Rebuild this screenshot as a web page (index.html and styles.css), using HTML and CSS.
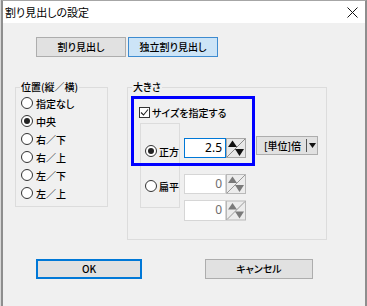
FILE: index.html
```html
<!DOCTYPE html>
<html lang="ja">
<head>
<meta charset="utf-8">
<title>割り見出しの設定</title>
<link rel="stylesheet" href="styles.css">
</head>
<body>
<div class="window">
  <div class="titlebar">
    <span class="title">割り見出しの設定</span>
    <svg class="close" width="11" height="11" viewBox="0 0 11 11"><path d="M0.5 0.5 L10.5 10.5 M10.5 0.5 L0.5 10.5" stroke="#111" stroke-width="1" fill="none"/></svg>
  </div>
  <div class="body">
    <div class="tabs">
      <button class="btn tab">割り見出し</button>
      <button class="btn tab active">独立割り見出し</button>
    </div>
    <div class="groups">
      <div class="group pos">
        <span class="legend">位置(縦／横)</span>
        <div class="radio-list">
          <label class="radio"><span class="rb"></span>指定なし</label>
          <label class="radio"><span class="rb on"></span>中央</label>
          <label class="radio"><span class="rb"></span>右／下</label>
          <label class="radio"><span class="rb"></span>右／上</label>
          <label class="radio"><span class="rb"></span>左／下</label>
          <label class="radio"><span class="rb"></span>左／上</label>
        </div>
      </div>
      <div class="group size">
        <span class="legend">大きさ</span>
        <label class="check"><span class="cb"><svg width="9" height="9" viewBox="0 0 9 9"><path d="M1 4.5 L3.5 7 L8 1.5" stroke="#222" stroke-width="1.1" fill="none"/></svg></span>サイズを指定する</label>
        <div class="size-row">
          <div class="frame">
            <label class="radio"><span class="rb on"></span>正方</label>
            <label class="radio"><span class="rb"></span>扁平</label>
          </div>
          <div class="inputs">
            <div class="spin-field f1">
              <span class="field focus">2.5</span>
              <svg class="spin" width="20" height="20" viewBox="0 0 20 20"><rect x="0.5" y="0.5" width="19" height="19" fill="#e8e8e8" stroke="#a8a8a8"/><path d="M1 19 L19 1" stroke="#8c8c8c"/><path d="M2 9 L6.5 2.5 L11 9 Z" fill="#111"/><path d="M9 11 L18 11 L13.5 18 Z" fill="#111"/></svg>
            </div>
            <div class="spin-field f2 disabled">
              <span class="field">0</span>
              <svg class="spin" width="20" height="20" viewBox="0 0 20 20"><rect x="0.5" y="0.5" width="19" height="19" fill="#ececec" stroke="#b8b8b8"/><path d="M1 19 L19 1" stroke="#9a9a9a"/><path d="M2 9 L6.5 2.5 L11 9 Z" fill="#7a7a7a"/><path d="M9 11 L18 11 L13.5 18 Z" fill="#7a7a7a"/></svg>
            </div>
            <div class="spin-field f3 disabled">
              <span class="field">0</span>
              <svg class="spin" width="20" height="20" viewBox="0 0 20 20"><rect x="0.5" y="0.5" width="19" height="19" fill="#ececec" stroke="#b8b8b8"/><path d="M1 19 L19 1" stroke="#9a9a9a"/><path d="M2 9 L6.5 2.5 L11 9 Z" fill="#7a7a7a"/><path d="M9 11 L18 11 L13.5 18 Z" fill="#7a7a7a"/></svg>
            </div>
          </div>
          <div class="combo">
            <span class="combo-text">[単位]倍</span>
            <span class="combo-arrow"><svg width="7" height="5" viewBox="0 0 7 5"><path d="M0 0 L7 0 L3.5 5 Z" fill="#111"/></svg></span>
          </div>
        </div>
        <div class="highlight"></div>
      </div>
    </div>
    <div class="footer">
      <button class="btn ok">OK</button>
      <button class="btn cancel">キャンセル</button>
    </div>
  </div>
</div>
</body>
</html>
```
FILE: styles.css
```css
* { box-sizing: border-box; }
html, body { margin: 0; padding: 0; }
body {
  width: 367px;
  height: 306px;
  background: #d8d8d8;
  font-family: "Noto Sans CJK JP", "Noto Sans", sans-serif;
  font-size: 10px;
  font-weight: 500;
  font-feature-settings: "palt";
  color: #000;
  overflow: hidden;
}
.window {
  margin-left: 1px;
  width: 366px;
  height: 306px;
  border-left: 2px solid #8e8e8e;
  border-right: 2px solid #8e8e8e;
  border-top: 1px solid #a6a6a6;
  background: #f0f0f0;
}
.titlebar {
  height: 22px;
  background: #fff;
  display: flex;
  align-items: center;
  justify-content: space-between;
  padding: 0 7px 0 2px;
}
.title { font-size: 11px; line-height: 14px; font-weight: 400; }
.close { display: block; }
.body { padding: 14px 0 0 33px; }
.tabs { display: flex; gap: 2px; }
.btn {
  font-family: inherit;
  font-size: 10px;
  font-weight: 500;
  font-feature-settings: "palt";
  color: #000;
  background: #e1e1e1;
  border: 1px solid #adadad;
  padding: 0;
  margin: 0;
  height: 20px;
  line-height: 18px;
}
.tab { width: 90px; }
.tab.active { background: #cce4f7; border-color: #3d8bd0; }
.groups {
  display: flex;
  align-items: flex-start;
  gap: 19px;
  margin: 30px 0 0 -21px;
}
.group {
  position: relative;
  border: 1px solid #dcdcdc;
}
.legend {
  position: absolute;
  top: -8px;
  left: 4px;
  background: #f0f0f0;
  padding: 0 1px;
  line-height: 14px;
  white-space: nowrap;
}
.pos { width: 93px; height: 120px; padding: 6px 0 0 5px; }
.size { width: 200px; height: 153px; padding: 17px 0 0 11px; }
.radio-list { display: flex; flex-direction: column; }
.radio {
  display: flex;
  align-items: center;
  gap: 3px;
  height: 18px;
  white-space: nowrap;
}
.rb {
  width: 12px;
  height: 12px;
  border: 1px solid #333;
  border-radius: 50%;
  background: #fff;
  display: flex;
  align-items: center;
  justify-content: center;
  flex: none;
}
.rb.on::after {
  content: "";
  width: 6px;
  height: 6px;
  border-radius: 50%;
  background: #222;
}
.check {
  display: flex;
  align-items: center;
  gap: 2px;
  height: 14px;
  white-space: nowrap;
}
.cb {
  width: 11px;
  height: 11px;
  border: 1px solid #333;
  background: #fff;
  display: flex;
  align-items: center;
  justify-content: center;
}
.cb svg { display: block; }
.size-row {
  display: flex;
  align-items: flex-start;
  margin: 4px 0 0 1px;
}
.frame {
  width: 40px;
  height: 85px;
  border: 1px solid #dcdcdc;
  padding: 18px 0 0 4px;
  display: flex;
  flex-direction: column;
  gap: 17px;
}
.frame .radio { gap: 2px; }
.inputs {
  display: flex;
  flex-direction: column;
  margin: 15px 0 0 4px;
}
.spin-field { display: flex; height: 20px; }
.f2 { margin-top: 16px; }
.f3 { margin-top: 6px; height: 21px; }
.field {
  width: 42px;
  height: 100%;
  background: #fff;
  border: 1px solid #c8c8c8;
  font-family: "Noto Sans", sans-serif;
  font-size: 12px;
  font-weight: 400;
  text-align: right;
  padding-right: 3px;
  line-height: 18px;
}
.field.focus { border-color: #0078d7; }
.disabled .field { color: #6d6d6d; border-color: #d6d6d6; }
.spin { display: block; }
.f3 .spin { height: 21px; }
.combo {
  margin: 13px 0 0 10px;
  width: 62px;
  height: 19px;
  background: #e1e1e1;
  border: 1px solid #adadad;
  display: flex;
  align-items: center;
}
.combo-text { flex: 1; padding-left: 7px; line-height: 17px; white-space: nowrap; }
.combo-arrow {
  width: 11px;
  height: 13px;
  border-left: 1px solid #555;
  display: flex;
  align-items: center;
  justify-content: center;
}
.combo-arrow svg { display: block; }
.highlight {
  position: absolute;
  left: 3px;
  top: 8px;
  width: 124px;
  height: 70px;
  border: 3px solid #0000ff;
  pointer-events: none;
}
.footer {
  display: flex;
  gap: 63px;
  margin-top: 19px;
}
.ok { width: 106px; border: 2px solid #0078d7; line-height: 16px; }
.cancel { width: 108px; }
```
